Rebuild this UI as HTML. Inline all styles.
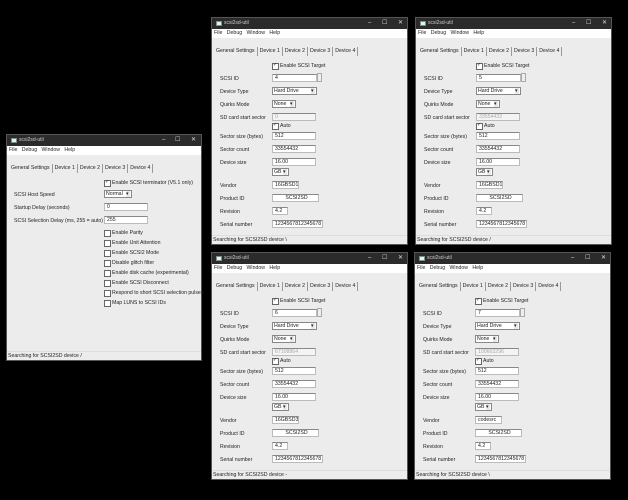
<!DOCTYPE html>
<html><head><meta charset="utf-8"><style>
*{margin:0;padding:0;box-sizing:border-box}
body{width:628px;height:500px;background:#000;position:relative;overflow:hidden;font-family:"Liberation Sans",sans-serif;font-size:5.2px;color:#222}
.w{position:absolute;width:197px;height:228px;background:#ececec;border:1px solid #555}
.t{position:absolute;left:0;top:0;right:0;height:11px;background:#2b2b2b;color:#ccc;font-size:5px;line-height:11px;padding-left:12px}
.t i{position:absolute;left:4px;top:3px;width:6px;height:5px;background:#cfe;border:1px solid #888}
.t b{position:absolute;top:0;font-weight:normal;color:#ddd;font-size:6px}
.m{position:absolute;left:0;right:0;top:11px;height:9px;background:#fff;line-height:9px;padding-left:2px;word-spacing:3px}
.tabs{position:absolute;left:2px;top:29px;height:9px;line-height:9px;white-space:nowrap}
.tabs span{display:inline-block;padding:0 2px;border-right:1px solid #999}
.s{position:absolute;left:0;right:0;bottom:0;height:9px;line-height:9px;background:#ececec;border-top:1px solid #ddd;padding-left:1px}
.l{position:absolute;left:8px;white-space:nowrap}
.f{position:absolute;height:8px;background:#fff;border:1px solid #bbb;border-top-color:#888;line-height:6px;padding-left:2px;white-space:nowrap;overflow:hidden}
.f.d{background:#f4f4f4;color:#aaa}
.dd{position:absolute;height:8px;background:#fff;border:1px solid #888;line-height:6px;padding-left:1px;white-space:nowrap}
.dd:after{content:"▾";position:absolute;right:1px;top:0;width:4px;height:6px;font-size:5px;line-height:6px;background:#e8e8e8}
.c{position:absolute;white-space:nowrap;padding-left:8px;line-height:6px}
.c:before{content:"";position:absolute;left:0;top:0;width:5px;height:5px;background:#fff;border:1px solid #666}
.c.k:after{content:"✓";position:absolute;left:1px;top:0;font-size:5px;line-height:5px}
.sp{position:absolute;width:5px;height:9px;border:1px solid #aaa;background:#eee}
</style></head><body>

<div class="w" style="left:6px;top:134px;width:196px;height:227px">
<div class="t"><i></i>scsi2sd-util<b style="left:155px">–</b><b style="left:168px">☐</b><b style="left:184px">✕</b></div>
<div class="m">File Debug Window Help</div>
<div class="tabs"><span>General Settings</span><span>Device 1</span><span>Device 2</span><span>Device 3</span><span>Device 4</span></div>
<div class="c k" style="left:97px;top:45px">Enable SCSI terminator (V5.1 only)</div>
<div class="l" style="left:7px;top:57px">SCSI Host Speed</div><div class="dd" style="left:97px;top:55px;width:28px">Normal</div>
<div class="l" style="left:7px;top:70px">Startup Delay (seconds)</div><div class="f" style="left:97px;top:68px;width:44px">0</div>
<div class="l" style="left:7px;top:83px">SCSI Selection Delay (ms, 255 = auto)</div><div class="f" style="left:97px;top:81px;width:44px">255</div>
<div class="c" style="left:97px;top:95px">Enable Parity</div>
<div class="c" style="left:97px;top:105px">Enable Unit Attention</div>
<div class="c" style="left:97px;top:115px">Enable SCSI2 Mode</div>
<div class="c" style="left:97px;top:125px">Disable glitch filter</div>
<div class="c" style="left:97px;top:135px">Enable disk cache (experimental)</div>
<div class="c" style="left:97px;top:145px">Enable SCSI Disconnect</div>
<div class="c" style="left:97px;top:155px">Respond to short SCSI selection pulses</div>
<div class="c" style="left:97px;top:165px">Map LUNS to SCSI IDs</div>
<div class="s">Searching for SCSI2SD device /</div>
</div>

<div class="w" style="left:211px;top:17px">
<div class="t"><i></i>scsi2sd-util<b style="left:156px">–</b><b style="left:170px">☐</b><b style="left:186px">✕</b></div>
<div class="m">File Debug Window Help</div>
<div class="tabs"><span>General Settings</span><span>Device 1</span><span>Device 2</span><span>Device 3</span><span>Device 4</span></div>
<div class="c k" style="left:60px;top:45px">Enable SCSI Target</div>
<div class="l" style="top:58px">SCSI ID</div><div class="f" style="left:60px;top:56px;width:45px">4</div><div class="sp" style="left:105px;top:55px"></div>
<div class="l" style="top:71px">Device Type</div><div class="dd" style="left:60px;top:69px;width:45px">Hard Drive</div>
<div class="l" style="top:84px">Quirks Mode</div><div class="dd" style="left:60px;top:82px;width:24px">None</div>
<div class="l" style="top:97px">SD card start sector</div><div class="f d" style="left:60px;top:95px;width:44px">0</div>
<div class="c k" style="left:60px;top:105px">Auto</div>
<div class="l" style="top:116px">Sector size (bytes)</div><div class="f" style="left:60px;top:114px;width:44px">512</div>
<div class="l" style="top:129px">Sector count</div><div class="f" style="left:60px;top:127px;width:44px">33554432</div>
<div class="l" style="top:142px">Device size</div><div class="f" style="left:60px;top:140px;width:44px">16.00</div>
<div class="dd" style="left:60px;top:150px;width:17px">GB</div>
<div class="l" style="top:165px">Vendor</div><div class="f" style="left:60px;top:163px;width:27px">16GBSD1</div>
<div class="l" style="top:178px">Product ID</div><div class="f" style="left:60px;top:176px;width:47px;text-align:center">SCSI2SD</div>
<div class="l" style="top:191px">Revision</div><div class="f" style="left:60px;top:189px;width:16px">4.2</div>
<div class="l" style="top:204px">Serial number</div><div class="f" style="left:60px;top:202px;width:51px">1234567812345678</div>
<div class="s">Searching for SCSI2SD device \</div>
</div>

<div class="w" style="left:415px;top:17px">
<div class="t"><i></i>scsi2sd-util<b style="left:156px">–</b><b style="left:170px">☐</b><b style="left:186px">✕</b></div>
<div class="m">File Debug Window Help</div>
<div class="tabs"><span>General Settings</span><span>Device 1</span><span>Device 2</span><span>Device 3</span><span>Device 4</span></div>
<div class="c k" style="left:60px;top:45px">Enable SCSI Target</div>
<div class="l" style="top:58px">SCSI ID</div><div class="f" style="left:60px;top:56px;width:45px">5</div><div class="sp" style="left:105px;top:55px"></div>
<div class="l" style="top:71px">Device Type</div><div class="dd" style="left:60px;top:69px;width:45px">Hard Drive</div>
<div class="l" style="top:84px">Quirks Mode</div><div class="dd" style="left:60px;top:82px;width:24px">None</div>
<div class="l" style="top:97px">SD card start sector</div><div class="f d" style="left:60px;top:95px;width:44px">33554432</div>
<div class="c k" style="left:60px;top:105px">Auto</div>
<div class="l" style="top:116px">Sector size (bytes)</div><div class="f" style="left:60px;top:114px;width:44px">512</div>
<div class="l" style="top:129px">Sector count</div><div class="f" style="left:60px;top:127px;width:44px">33554432</div>
<div class="l" style="top:142px">Device size</div><div class="f" style="left:60px;top:140px;width:44px">16.00</div>
<div class="dd" style="left:60px;top:150px;width:17px">GB</div>
<div class="l" style="top:165px">Vendor</div><div class="f" style="left:60px;top:163px;width:27px">16GBSD1</div>
<div class="l" style="top:178px">Product ID</div><div class="f" style="left:60px;top:176px;width:47px;text-align:center">SCSI2SD</div>
<div class="l" style="top:191px">Revision</div><div class="f" style="left:60px;top:189px;width:16px">4.2</div>
<div class="l" style="top:204px">Serial number</div><div class="f" style="left:60px;top:202px;width:51px">1234567812345678</div>
<div class="s">Searching for SCSI2SD device /</div>
</div>

<div class="w" style="left:211px;top:252px">
<div class="t"><i></i>scsi2sd-util<b style="left:156px">–</b><b style="left:170px">☐</b><b style="left:186px">✕</b></div>
<div class="m">File Debug Window Help</div>
<div class="tabs"><span>General Settings</span><span>Device 1</span><span>Device 2</span><span>Device 3</span><span>Device 4</span></div>
<div class="c k" style="left:60px;top:45px">Enable SCSI Target</div>
<div class="l" style="top:58px">SCSI ID</div><div class="f" style="left:60px;top:56px;width:45px">6</div><div class="sp" style="left:105px;top:55px"></div>
<div class="l" style="top:71px">Device Type</div><div class="dd" style="left:60px;top:69px;width:45px">Hard Drive</div>
<div class="l" style="top:84px">Quirks Mode</div><div class="dd" style="left:60px;top:82px;width:24px">None</div>
<div class="l" style="top:97px">SD card start sector</div><div class="f d" style="left:60px;top:95px;width:44px">67108864</div>
<div class="c k" style="left:60px;top:105px">Auto</div>
<div class="l" style="top:116px">Sector size (bytes)</div><div class="f" style="left:60px;top:114px;width:44px">512</div>
<div class="l" style="top:129px">Sector count</div><div class="f" style="left:60px;top:127px;width:44px">33554432</div>
<div class="l" style="top:142px">Device size</div><div class="f" style="left:60px;top:140px;width:44px">16.00</div>
<div class="dd" style="left:60px;top:150px;width:17px">GB</div>
<div class="l" style="top:165px">Vendor</div><div class="f" style="left:60px;top:163px;width:27px">16GBSD3</div>
<div class="l" style="top:178px">Product ID</div><div class="f" style="left:60px;top:176px;width:47px;text-align:center">SCSI2SD</div>
<div class="l" style="top:191px">Revision</div><div class="f" style="left:60px;top:189px;width:16px">4.2</div>
<div class="l" style="top:204px">Serial number</div><div class="f" style="left:60px;top:202px;width:51px">1234567812345678</div>
<div class="s">Searching for SCSI2SD device -</div>
</div>

<div class="w" style="left:414px;top:252px">
<div class="t"><i></i>scsi2sd-util<b style="left:156px">–</b><b style="left:170px">☐</b><b style="left:186px">✕</b></div>
<div class="m">File Debug Window Help</div>
<div class="tabs"><span>General Settings</span><span>Device 1</span><span>Device 2</span><span>Device 3</span><span>Device 4</span></div>
<div class="c k" style="left:60px;top:45px">Enable SCSI Target</div>
<div class="l" style="top:58px">SCSI ID</div><div class="f" style="left:60px;top:56px;width:45px">7</div><div class="sp" style="left:105px;top:55px"></div>
<div class="l" style="top:71px">Device Type</div><div class="dd" style="left:60px;top:69px;width:45px">Hard Drive</div>
<div class="l" style="top:84px">Quirks Mode</div><div class="dd" style="left:60px;top:82px;width:24px">None</div>
<div class="l" style="top:97px">SD card start sector</div><div class="f d" style="left:60px;top:95px;width:44px">100663296</div>
<div class="c k" style="left:60px;top:105px">Auto</div>
<div class="l" style="top:116px">Sector size (bytes)</div><div class="f" style="left:60px;top:114px;width:44px">512</div>
<div class="l" style="top:129px">Sector count</div><div class="f" style="left:60px;top:127px;width:44px">33554432</div>
<div class="l" style="top:142px">Device size</div><div class="f" style="left:60px;top:140px;width:44px">16.00</div>
<div class="dd" style="left:60px;top:150px;width:17px">GB</div>
<div class="l" style="top:165px">Vendor</div><div class="f" style="left:60px;top:163px;width:27px">codesrc</div>
<div class="l" style="top:178px">Product ID</div><div class="f" style="left:60px;top:176px;width:47px;text-align:center">SCSI2SD</div>
<div class="l" style="top:191px">Revision</div><div class="f" style="left:60px;top:189px;width:16px">4.2</div>
<div class="l" style="top:204px">Serial number</div><div class="f" style="left:60px;top:202px;width:51px">1234567812345678</div>
<div class="s">Searching for SCSI2SD device \</div>
</div>

</body></html>
